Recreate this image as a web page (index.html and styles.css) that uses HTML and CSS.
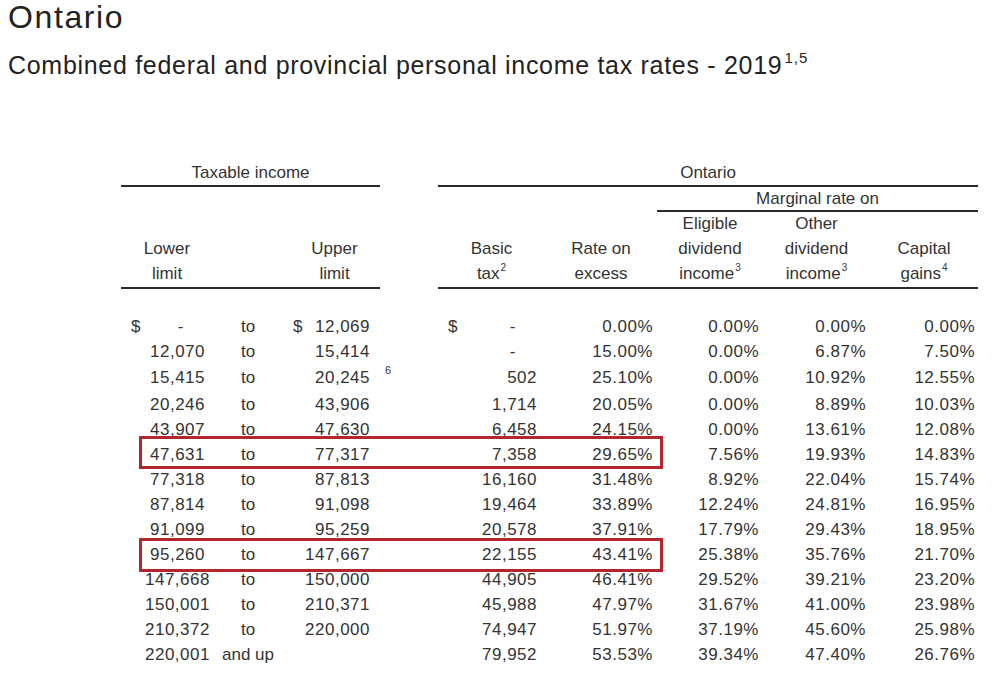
FILE: index.html
```html
<!DOCTYPE html>
<html>
<head>
<meta charset="utf-8">
<link rel="stylesheet" href="styles.css">
</head>
<body>
<header class="head">
  <h1 class="title">Ontario</h1>
  <p class="subtitle">Combined federal and provincial personal income tax rates - 2019<sup class="sub-note">1,5</sup></p>
</header>
<table class="rates">
  <colgroup>
    <col class="c1"><col class="c2"><col class="c3"><col class="c4"><col class="c5"><col class="c6">
    <col class="c7"><col class="c8"><col class="c9"><col class="c10"><col class="c11"><col class="c12">
  </colgroup>
  <thead>
    <tr class="ha">
      <th colspan="5" class="rule">Taxable income</th>
      <th></th>
      <th colspan="6" class="rule">Ontario</th>
    </tr>
    <tr class="hb">
      <th colspan="9"></th>
      <th colspan="3" class="rule">Marginal rate on</th>
    </tr>
    <tr class="hc">
      <th colspan="9"></th>
      <th>Eligible</th>
      <th>Other</th>
      <th></th>
    </tr>
    <tr class="hd">
      <th colspan="2" class="lower">Lower</th>
      <th></th>
      <th colspan="2" class="upper">Upper</th>
      <th></th>
      <th colspan="2">Basic</th>
      <th>Rate on</th>
      <th>dividend</th>
      <th>dividend</th>
      <th>Capital</th>
    </tr>
    <tr class="he">
      <th colspan="2" class="rule lower">limit</th>
      <th class="rule"></th>
      <th colspan="2" class="rule upper">limit</th>
      <th></th>
      <th colspan="2" class="rule">tax<sup class="fn">2</sup></th>
      <th class="rule">excess</th>
      <th class="rule">income<sup class="fn">3</sup></th>
      <th class="rule">income<sup class="fn">3</sup></th>
      <th class="rule">gains<sup class="fn">4</sup></th>
    </tr>
    <tr class="spacer"><th colspan="12"></th></tr>
  </thead>
  <tbody>
    <tr>
      <td class="cur">$</td><td class="num"><span class="dash">-</span></td><td class="to">to</td><td class="cur2">$</td><td class="num up">12,069</td><td></td>
      <td class="cur">$</td><td class="num bt"><span class="dash">-</span></td><td class="num r">0.00%</td><td class="num r">0.00%</td><td class="num r">0.00%</td><td class="num r cg">0.00%</td>
    </tr>
    <tr>
      <td></td><td class="num">12,070</td><td class="to">to</td><td></td><td class="num up">15,414</td><td></td>
      <td></td><td class="num bt"><span class="dash">-</span></td><td class="num r">15.00%</td><td class="num r">0.00%</td><td class="num r">6.87%</td><td class="num r cg">7.50%</td>
    </tr>
    <tr class="tall">
      <td></td><td class="num">15,415</td><td class="to">to</td><td></td><td class="num up">20,245</td><td class="note"><span class="note6">6</span></td>
      <td></td><td class="num bt">502</td><td class="num r">25.10%</td><td class="num r">0.00%</td><td class="num r">10.92%</td><td class="num r cg">12.55%</td>
    </tr>
    <tr>
      <td></td><td class="num">20,246</td><td class="to">to</td><td></td><td class="num up">43,906</td><td></td>
      <td></td><td class="num bt">1,714</td><td class="num r">20.05%</td><td class="num r">0.00%</td><td class="num r">8.89%</td><td class="num r cg">10.03%</td>
    </tr>
    <tr>
      <td></td><td class="num">43,907</td><td class="to">to</td><td></td><td class="num up">47,630</td><td></td>
      <td></td><td class="num bt">6,458</td><td class="num r">24.15%</td><td class="num r">0.00%</td><td class="num r">13.61%</td><td class="num r cg">12.08%</td>
    </tr>
    <tr class="hl hl1">
      <td></td><td class="num">47,631</td><td class="to">to</td><td></td><td class="num up">77,317</td><td></td>
      <td></td><td class="num bt">7,358</td><td class="num r">29.65%</td><td class="num r">7.56%</td><td class="num r">19.93%</td><td class="num r cg">14.83%</td>
    </tr>
    <tr>
      <td></td><td class="num">77,318</td><td class="to">to</td><td></td><td class="num up">87,813</td><td></td>
      <td></td><td class="num bt">16,160</td><td class="num r">31.48%</td><td class="num r">8.92%</td><td class="num r">22.04%</td><td class="num r cg">15.74%</td>
    </tr>
    <tr>
      <td></td><td class="num">87,814</td><td class="to">to</td><td></td><td class="num up">91,098</td><td></td>
      <td></td><td class="num bt">19,464</td><td class="num r">33.89%</td><td class="num r">12.24%</td><td class="num r">24.81%</td><td class="num r cg">16.95%</td>
    </tr>
    <tr>
      <td></td><td class="num">91,099</td><td class="to">to</td><td></td><td class="num up">95,259</td><td></td>
      <td></td><td class="num bt">20,578</td><td class="num r">37.91%</td><td class="num r">17.79%</td><td class="num r">29.43%</td><td class="num r cg">18.95%</td>
    </tr>
    <tr class="hl hl2">
      <td></td><td class="num">95,260</td><td class="to">to</td><td></td><td class="num up">147,667</td><td></td>
      <td></td><td class="num bt">22,155</td><td class="num r">43.41%</td><td class="num r">25.38%</td><td class="num r">35.76%</td><td class="num r cg">21.70%</td>
    </tr>
    <tr>
      <td></td><td class="num">147,668</td><td class="to">to</td><td></td><td class="num up">150,000</td><td></td>
      <td></td><td class="num bt">44,905</td><td class="num r">46.41%</td><td class="num r">29.52%</td><td class="num r">39.21%</td><td class="num r cg">23.20%</td>
    </tr>
    <tr>
      <td></td><td class="num">150,001</td><td class="to">to</td><td></td><td class="num up">210,371</td><td></td>
      <td></td><td class="num bt">45,988</td><td class="num r">47.97%</td><td class="num r">31.67%</td><td class="num r">41.00%</td><td class="num r cg">23.98%</td>
    </tr>
    <tr>
      <td></td><td class="num">210,372</td><td class="to">to</td><td></td><td class="num up">220,000</td><td></td>
      <td></td><td class="num bt">74,947</td><td class="num r">51.97%</td><td class="num r">37.19%</td><td class="num r">45.60%</td><td class="num r cg">25.98%</td>
    </tr>
    <tr>
      <td></td><td class="num">220,001</td><td class="to">and up</td><td></td><td class="num up"></td><td></td>
      <td></td><td class="num bt">79,952</td><td class="num r">53.53%</td><td class="num r">39.34%</td><td class="num r">47.40%</td><td class="num r cg">26.76%</td>
    </tr>
  </tbody>
</table>
</body>
</html>
```
FILE: styles.css
```css
*, *::before, *::after { box-sizing: border-box; }
html, body { margin: 0; padding: 0; background: #fff; }
body {
  font-family: "Liberation Sans", Arial, sans-serif;
  color: #333;
  width: 996px;
  height: 688px;
  overflow: hidden;
}
.head { padding-left: 8px; }
.title {
  margin: 0;
  font-weight: normal;
  font-size: 32px;
  line-height: 34px;
  letter-spacing: 1.6px;
  color: #222;
}
.subtitle {
  margin: 16px 0 0;
  font-size: 25px;
  line-height: 30px;
  letter-spacing: 0.7px;
  color: #222;
}
.sub-note {
  font-size: 15px;
  line-height: 0;
  vertical-align: baseline;
  position: relative;
  top: -11px;
  margin-left: 2px;
  letter-spacing: 1px;
}
.rates {
  margin: 80px 0 0 121px;
  width: 857px;
  table-layout: fixed;
  border-collapse: separate;
  border-spacing: 0;
  font-size: 17px;
  color: #333;
}
.c1 { width: 24px; }
.c2 { width: 62px; }
.c3 { width: 82px; }
.c4 { width: 16px; }
.c5 { width: 75px; }
.c6 { width: 58px; }
.c7 { width: 22px; }
.c8 { width: 85px; }
.c9 { width: 112px; }
.c10 { width: 106px; }
.c11 { width: 107px; }
.c12 { width: 108px; }
.rates th {
  font-weight: normal;
  padding: 0;
  text-align: center;
  vertical-align: middle;
  white-space: nowrap;
}
.rates th.rule { border-bottom: 2px solid #2a2a2a; }
.ha th { line-height: 25px; }
.hb th { line-height: 23px; }
.hc th { line-height: 24px; }
.hd th { line-height: 25px; }
.he th { line-height: 26px; }
.spacer th { height: 25px; line-height: 25px; }
.lower { padding-left: 6px !important; }
.upper { padding-left: 0 !important; }
.fn {
  font-size: 10px;
  line-height: 0;
  vertical-align: baseline;
  position: relative;
  top: -8px;
  margin-left: 1px;
}
.rates td {
  padding: 0;
  line-height: 25px;
  height: 25px;
  white-space: nowrap;
  vertical-align: middle;
}
.rates tr.tall td { height: 28px; line-height: 28px; }
.num { text-align: right; letter-spacing: 0.5px; padding-right: 2px !important; }
.num.up { padding-right: 10px !important; }
.num.bt { padding-right: 8px !important; }
.num.r { padding-right: 4px !important; }
.num.cg { padding-right: 3px !important; }
.dash { padding-right: 21px; }
.cur { padding-left: 10px !important; }
.cur2 { padding-left: 4px !important; }
.to { text-align: center; }
.note { position: relative; }
.note6 {
  position: absolute;
  left: 5px;
  top: -1px;
  font-size: 11px;
  line-height: 14px;
}
.hl td:first-child { position: relative; }
.hl td:first-child::after {
  content: "";
  position: absolute;
  left: 18px;
  width: 524px;
  border: 3px solid #b3262b;
  pointer-events: none;
}
.hl1 td:first-child::after { top: -6px; bottom: -2px; }
.hl2 td:first-child::after { top: -4px; bottom: -5px; }
```
